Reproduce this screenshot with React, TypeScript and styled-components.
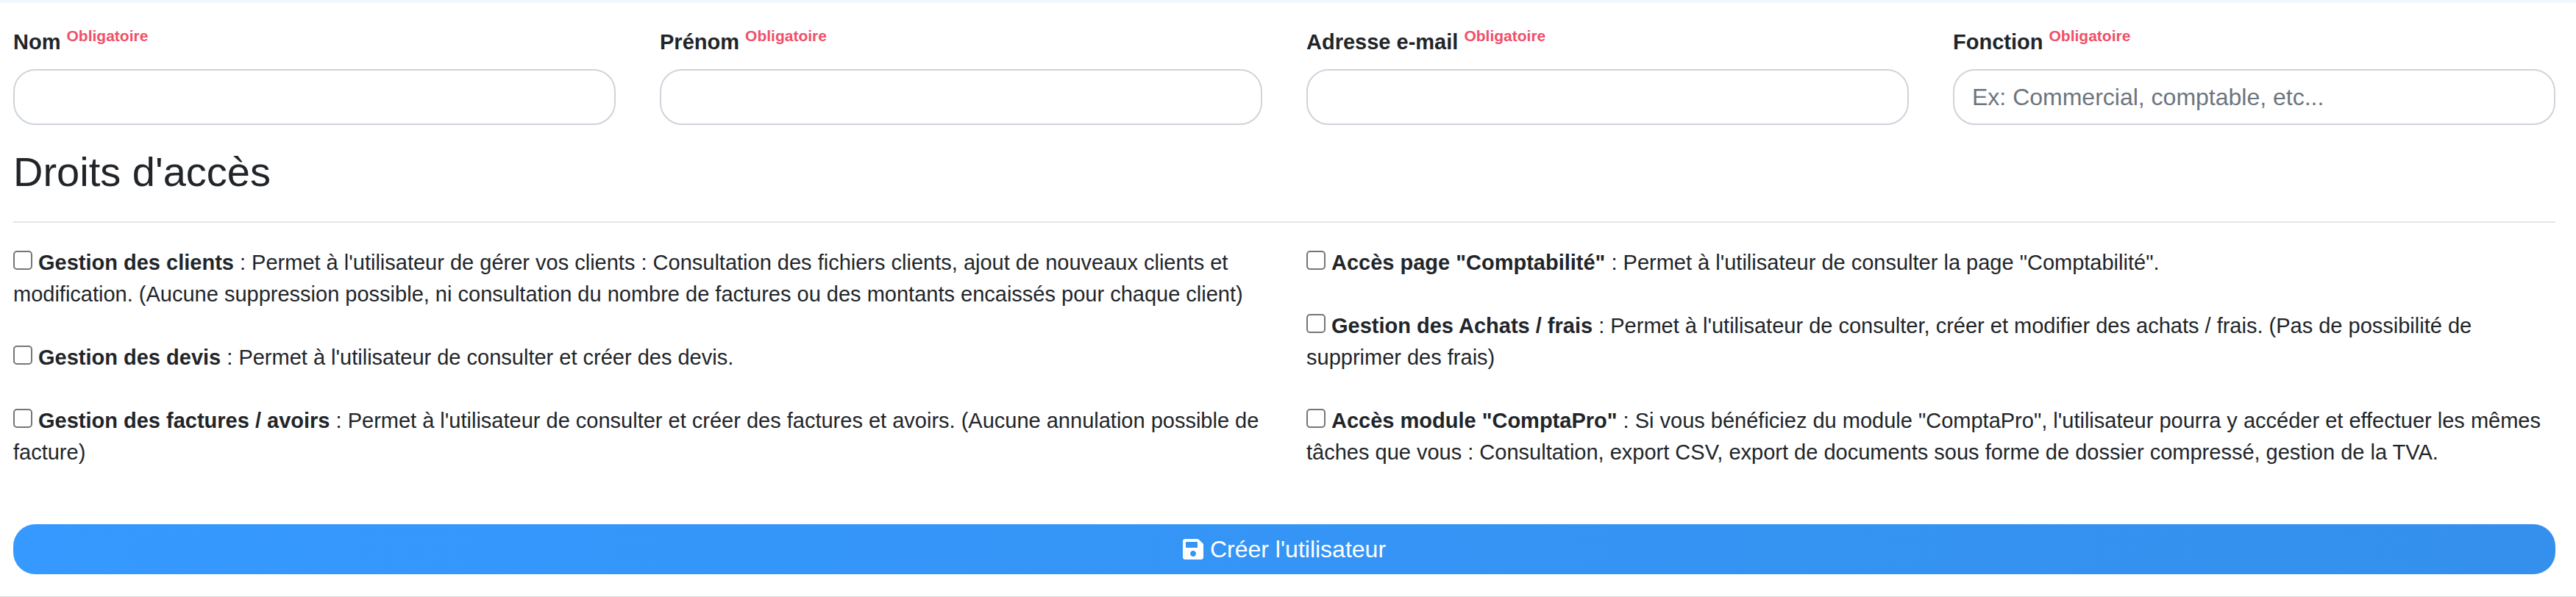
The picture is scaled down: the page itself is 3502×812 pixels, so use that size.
import React, { useId } from "react";
import styled, { createGlobalStyle } from "styled-components";

const GlobalStyle = createGlobalStyle`
  *, *::before, *::after { box-sizing: border-box; }
  body {
    margin: 0;
    background: #fff;
    color: #212529;
    font-family: "Liberation Sans", Helvetica, Arial, sans-serif;
    font-size: 29px;
    line-height: 43px;
  }
`;

const Form = styled.form`
  padding: 32px 28px 30px 18px;
  border-top: 4px solid #f0f8ff;
  border-bottom: 1px solid #d9dadb;
`;

const Fields = styled.div`
  display: grid;
  grid-template-columns: repeat(4, minmax(0, 1fr));
  column-gap: 60px;
`;

const Field = styled.div`
  display: flex;
  flex-direction: column;
  gap: 15px;
`;

const FieldLabel = styled.label`
  font-weight: 700;
`;

const Required = styled.sup`
  color: #f0506a;
  font-size: 21px;
  line-height: 0;
  vertical-align: 11px;
`;

const TextInput = styled.input`
  width: 100%;
  height: 76px;
  padding: 0 24px;
  border: 2px solid #ced4da;
  border-radius: 30px;
  background: #fff;
  color: #495057;
  font: inherit;
  font-size: 32px;

  &::placeholder {
    color: #6c757d;
    opacity: 1;
  }
`;

const SectionTitle = styled.h3`
  margin: 30px 0 34px;
  font-size: 56px;
  font-weight: 400;
  line-height: 67px;
`;

const Divider = styled.hr`
  margin: 0 0 33px;
  border: 0;
  border-top: 2px solid #e5e5e5;
`;

const Rights = styled.div`
  display: grid;
  grid-template-columns: repeat(2, minmax(0, 1fr));
  column-gap: 60px;
`;

const RightsColumn = styled.div`
  display: flex;
  flex-direction: column;
  gap: 43px;
`;

const Checkbox = styled.input`
  appearance: none;
  width: 26px;
  height: 26px;
  margin: 0 8px 0 0;
  border: 2px solid #767676;
  border-radius: 5px;
  background: #fff;
  vertical-align: baseline;

  &:checked {
    background: #3699ff;
    border-color: #3699ff;
  }
`;

const SubmitButton = styled.button`
  display: flex;
  align-items: center;
  justify-content: center;
  gap: 9px;
  width: 100%;
  height: 68px;
  margin-top: 76px;
  padding: 0;
  border: 0;
  border-radius: 30px;
  background: linear-gradient(to right, #3699ff, #3490ec);
  color: #fff;
  font: inherit;
  font-size: 32px;
  cursor: pointer;
`;

const SaveIcon = () => (
  <svg width="28" height="32" viewBox="0 0 448 512" fill="currentColor" aria-hidden="true">
    <path d="M433.941 129.941l-83.882-83.882A48 48 0 0 0 316.118 32H48C21.49 32 0 53.49 0 80v352c0 26.51 21.49 48 48 48h352c26.51 0 48-21.49 48-48V163.882a48 48 0 0 0-14.059-33.941zM224 416c-35.346 0-64-28.654-64-64 0-35.346 28.654-64 64-64s64 28.654 64 64c0 35.346-28.654 64-64 64zm96-304.52V212c0 6.627-5.373 12-12 12H76c-6.627 0-12-5.373-12-12V108c0-6.627 5.373-12 12-12h228.52c3.183 0 6.235 1.264 8.485 3.515l3.48 3.48A11.996 11.996 0 0 1 320 111.48z" />
  </svg>
);

interface RequiredFieldProps {
  label: string;
  name: string;
  type?: string;
  placeholder?: string;
}

function RequiredField({ label, name, type = "text", placeholder }: RequiredFieldProps) {
  const id = useId();
  return (
    <Field>
      <FieldLabel htmlFor={id}>
        {label} <Required>Obligatoire</Required>
      </FieldLabel>
      <TextInput id={id} name={name} type={type} placeholder={placeholder} required />
    </Field>
  );
}

interface Right {
  name: string;
  title: string;
  description: string;
}

const leftRights: Right[] = [
  {
    name: "clients",
    title: "Gestion des clients",
    description:
      "Permet à l'utilisateur de gérer vos clients : Consultation des fichiers clients, ajout de nouveaux clients et modification. (Aucune suppression possible, ni consultation du nombre de factures ou des montants encaissés pour chaque client)",
  },
  {
    name: "devis",
    title: "Gestion des devis",
    description: "Permet à l'utilisateur de consulter et créer des devis.",
  },
  {
    name: "factures",
    title: "Gestion des factures / avoirs",
    description:
      "Permet à l'utilisateur de consulter et créer des factures et avoirs. (Aucune annulation possible de facture)",
  },
];

const rightRights: Right[] = [
  {
    name: "comptabilite",
    title: 'Accès page "Comptabilité"',
    description: "Permet à l'utilisateur de consulter la page \"Comptabilité\".",
  },
  {
    name: "achats",
    title: "Gestion des Achats / frais",
    description:
      "Permet à l'utilisateur de consulter, créer et modifier des achats / frais. (Pas de possibilité de supprimer des frais)",
  },
  {
    name: "comptapro",
    title: 'Accès module "ComptaPro"',
    description:
      "Si vous bénéficiez du module \"ComptaPro\", l'utilisateur pourra y accéder et effectuer les mêmes tâches que vous : Consultation, export CSV, export de documents sous forme de dossier compressé, gestion de la TVA.",
  },
];

function RightsList({ rights }: { rights: Right[] }) {
  return (
    <RightsColumn>
      {rights.map((right) => (
        <label key={right.name}>
          <Checkbox type="checkbox" name={right.name} />
          <strong>{right.title}</strong> : {right.description}
        </label>
      ))}
    </RightsColumn>
  );
}

export default function App() {
  return (
    <>
      <GlobalStyle />
      <Form onSubmit={(event) => event.preventDefault()}>
        <Fields>
          <RequiredField label="Nom" name="nom" />
          <RequiredField label="Prénom" name="prenom" />
          <RequiredField label="Adresse e-mail" name="email" type="email" />
          <RequiredField label="Fonction" name="fonction" placeholder="Ex: Commercial, comptable, etc..." />
        </Fields>
        <SectionTitle>Droits d'accès</SectionTitle>
        <Divider />
        <Rights>
          <RightsList rights={leftRights} />
          <RightsList rights={rightRights} />
        </Rights>
        <SubmitButton type="submit">
          <SaveIcon />
          Créer l'utilisateur
        </SubmitButton>
      </Form>
    </>
  );
}
